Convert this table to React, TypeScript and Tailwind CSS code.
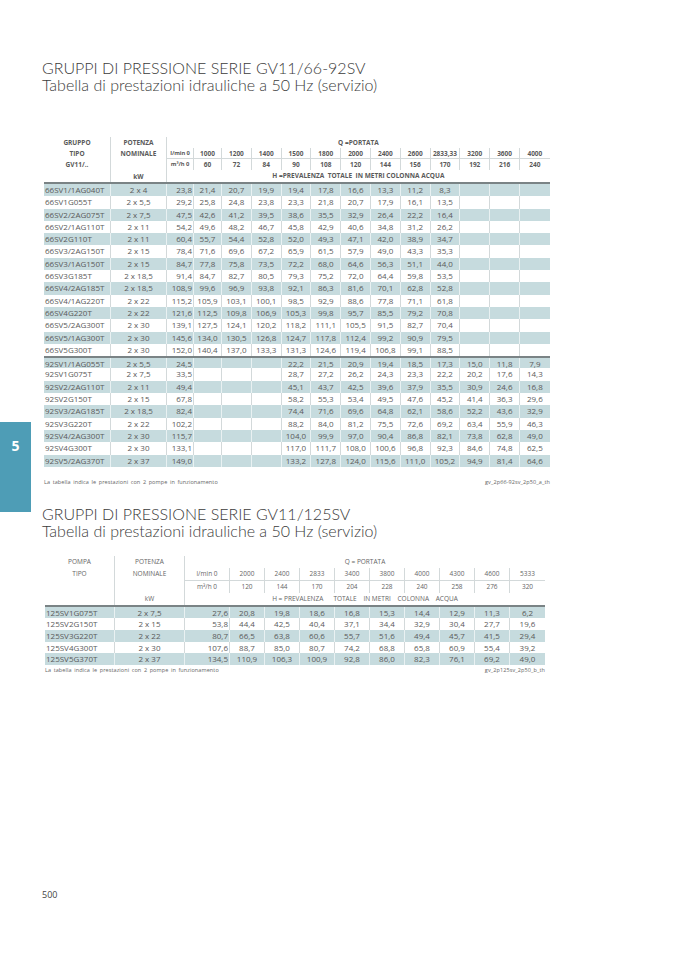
import React from 'react';

type Row = { name: string; kw: string; vals: string[] };

const E = '';

const t1Rows: Row[] = [
    { name: '66SV1/1AG040T', kw: '2 x 4', vals: ['23,8', '21,4', '20,7', '19,9', '19,4', '17,8', '16,6', '13,3', '11,2', '8,3', E, E, E] },
    { name: '66SV1G055T', kw: '2 x 5,5', vals: ['29,2', '25,8', '24,8', '23,8', '23,3', '21,8', '20,7', '17,9', '16,1', '13,5', E, E, E] },
    { name: '66SV2/2AG075T', kw: '2 x 7,5', vals: ['47,5', '42,6', '41,2', '39,5', '38,6', '35,5', '32,9', '26,4', '22,2', '16,4', E, E, E] },
    { name: '66SV2/1AG110T', kw: '2 x 11', vals: ['54,2', '49,6', '48,2', '46,7', '45,8', '42,9', '40,6', '34,8', '31,2', '26,2', E, E, E] },
    { name: '66SV2G110T', kw: '2 x 11', vals: ['60,4', '55,7', '54,4', '52,8', '52,0', '49,3', '47,1', '42,0', '38,9', '34,7', E, E, E] },
    { name: '66SV3/2AG150T', kw: '2 x 15', vals: ['78,4', '71,6', '69,6', '67,2', '65,9', '61,5', '57,9', '49,0', '43,3', '35,3', E, E, E] },
    { name: '66SV3/1AG150T', kw: '2 x 15', vals: ['84,7', '77,8', '75,8', '73,5', '72,2', '68,0', '64,6', '56,3', '51,1', '44,0', E, E, E] },
    { name: '66SV3G185T', kw: '2 x 18,5', vals: ['91,4', '84,7', '82,7', '80,5', '79,3', '75,2', '72,0', '64,4', '59,8', '53,5', E, E, E] },
    { name: '66SV4/2AG185T', kw: '2 x 18,5', vals: ['108,9', '99,6', '96,9', '93,8', '92,1', '86,3', '81,6', '70,1', '62,8', '52,8', E, E, E] },
    { name: '66SV4/1AG220T', kw: '2 x 22', vals: ['115,2', '105,9', '103,1', '100,1', '98,5', '92,9', '88,6', '77,8', '71,1', '61,8', E, E, E] },
    { name: '66SV4G220T', kw: '2 x 22', vals: ['121,6', '112,5', '109,8', '106,9', '105,3', '99,8', '95,7', '85,5', '79,2', '70,8', E, E, E] },
    { name: '66SV5/2AG300T', kw: '2 x 30', vals: ['139,1', '127,5', '124,1', '120,2', '118,2', '111,1', '105,5', '91,5', '82,7', '70,4', E, E, E] },
    { name: '66SV5/1AG300T', kw: '2 x 30', vals: ['145,6', '134,0', '130,5', '126,8', '124,7', '117,8', '112,4', '99,2', '90,9', '79,5', E, E, E] },
    { name: '66SV5G300T', kw: '2 x 30', vals: ['152,0', '140,4', '137,0', '133,3', '131,3', '124,6', '119,4', '106,8', '99,1', '88,5', E, E, E] },
    { name: '92SV1/1AG055T', kw: '2 x 5,5', vals: ['24,5', E, E, E, '22,2', '21,5', '20,9', '19,4', '18,5', '17,3', '15,0', '11,8', '7,9'] },
    { name: '92SV1G075T', kw: '2 x 7,5', vals: ['33,5', E, E, E, '28,7', '27,2', '26,2', '24,3', '23,3', '22,2', '20,2', '17,6', '14,3'] },
    { name: '92SV2/2AG110T', kw: '2 x 11', vals: ['49,4', E, E, E, '45,1', '43,7', '42,5', '39,6', '37,9', '35,5', '30,9', '24,6', '16,8'] },
    { name: '92SV2G150T', kw: '2 x 15', vals: ['67,8', E, E, E, '58,2', '55,3', '53,4', '49,5', '47,6', '45,2', '41,4', '36,3', '29,6'] },
    { name: '92SV3/2AG185T', kw: '2 x 18,5', vals: ['82,4', E, E, E, '74,4', '71,6', '69,6', '64,8', '62,1', '58,6', '52,2', '43,6', '32,9'] },
    { name: '92SV3G220T', kw: '2 x 22', vals: ['102,2', E, E, E, '88,2', '84,0', '81,2', '75,5', '72,6', '69,2', '63,4', '55,9', '46,3'] },
    { name: '92SV4/2AG300T', kw: '2 x 30', vals: ['115,7', E, E, E, '104,0', '99,9', '97,0', '90,4', '86,8', '82,1', '73,8', '62,8', '49,0'] },
    { name: '92SV4G300T', kw: '2 x 30', vals: ['133,1', E, E, E, '117,0', '111,7', '108,0', '100,6', '96,8', '92,3', '84,6', '74,8', '62,5'] },
    { name: '92SV5/2AG370T', kw: '2 x 37', vals: ['149,0', E, E, E, '133,2', '127,8', '124,0', '115,6', '111,0', '105,2', '94,9', '81,4', '64,6'] },
];

const t2Rows: Row[] = [
    { name: '125SV1G075T', kw: '2 x 7,5', vals: ['27,6', '20,8', '19,8', '18,6', '16,8', '15,3', '14,4', '12,9', '11,3', '6,2'] },
    { name: '125SV2G150T', kw: '2 x 15', vals: ['53,8', '44,4', '42,5', '40,4', '37,1', '34,4', '32,9', '30,4', '27,7', '19,6'] },
    { name: '125SV3G220T', kw: '2 x 22', vals: ['80,7', '66,5', '63,8', '60,6', '55,7', '51,6', '49,4', '45,7', '41,5', '29,4'] },
    { name: '125SV4G300T', kw: '2 x 30', vals: ['107,6', '88,7', '85,0', '80,7', '74,2', '68,8', '65,8', '60,9', '55,4', '39,2'] },
    { name: '125SV5G370T', kw: '2 x 37', vals: ['134,5', '110,9', '106,3', '100,9', '92,8', '86,0', '82,3', '76,1', '69,2', '49,0'] },
];

const t1Lmin = ['1000', '1200', '1400', '1500', '1800', '2000', '2400', '2600', '2833,33', '3200', '3600', '4000'];
const t1M3h = ['60', '72', '84', '90', '108', '120', '144', '156', '170', '192', '216', '240'];
const t2Lmin = ['2000', '2400', '2833', '3400', '3800', '4000', '4300', '4600', '5333'];
const t2M3h = ['120', '144', '170', '204', '228', '240', '258', '276', '320'];

const G1 = 'grid grid-cols-[67px_56px_27px_28px_repeat(11,29.8px)]';
const G2 = 'grid grid-cols-[70px_70px_45px_repeat(9,35px)]';
const LINE = 'border-[#d3d9da]';

function DataRow({ row, grid, h, shaded, sep }: { row: Row; grid: string; h: string; shaded: boolean; sep?: boolean }) {
    const cells = [row.name, row.kw, ...row.vals];
    const last = cells.length - 1;
    const line = shaded ? 'border-[#e9f1f2]' : LINE;
    return (
        <div className={`${grid} ${h} ${shaded ? 'bg-[#c6dbde]' : 'bg-white'} ${sep ? 'border-t-2 border-[#7a8385]' : ''}`}>
            {cells.map((c, i) => (
                <div
                    key={i}
                    className={`whitespace-nowrap ${i < last ? 'border-r ' + line : ''} ${i === 0 ? 'text-left pl-[1px]' : i === 2 ? 'text-right pr-[1px]' : 'text-center'}`}
                >
                    {c}
                </div>
            ))}
        </div>
    );
}

function Titles({ serie }: { serie: string }) {
    return (
        <div className="font-['Lato',sans-serif] font-light text-[16px] leading-[17px] text-[#3b3b3b]">
            <div>GRUPPI DI PRESSIONE SERIE {serie}</div>
            <div>Tabella di prestazioni idrauliche a 50 Hz (servizio)</div>
        </div>
    );
}

function Footnote({ code, width }: { code: string; width: string }) {
    return (
        <div className={`flex justify-between ${width} text-[5.5px] leading-[8px] text-[#666] tracking-[0.1px] [word-spacing:1px]`}>
            <span>La tabella indica le prestazioni con 2 pompe in funzionamento</span>
            <span>{code}</span>
        </div>
    );
}

function Table1() {
    const hRow = 'h-[11px] leading-[11px]';
    return (
        <div className="w-[506px] text-[#5a5a5a]">
            <div className={`${G1} text-[6.5px] font-bold`}>
                <div className={`${hRow} text-center border-r ${LINE}`}>GRUPPO</div>
                <div className={`${hRow} text-center border-r ${LINE}`}>POTENZA</div>
                <div className={`${hRow} col-span-13 text-center`}>Q =PORTATA</div>

                <div className={`${hRow} text-center border-r ${LINE}`}>TIPO</div>
                <div className={`${hRow} text-center border-r ${LINE}`}>NOMINALE</div>
                <div className={`${hRow} text-center border-r border-b ${LINE} whitespace-nowrap text-[5.8px] tracking-[-0.1px]`}>l/min 0</div>
                {t1Lmin.map((v, i) => (
                    <div key={v} className={`${hRow} text-center border-b ${LINE} ${i < t1Lmin.length - 1 ? 'border-r' : ''} whitespace-nowrap`}>{v}</div>
                ))}

                <div className={`${hRow} text-center border-r ${LINE}`}>GV11/..</div>
                <div className={`${hRow} border-r ${LINE}`}></div>
                <div className={`${hRow} text-center border-r ${LINE} whitespace-nowrap text-[5.8px] tracking-[-0.1px]`}>m³/h 0</div>
                {t1M3h.map((v, i) => (
                    <div key={v} className={`${hRow} text-center ${LINE} ${i < t1M3h.length - 1 ? 'border-r' : ''}`}>{v}</div>
                ))}

                <div className={`h-[12px] leading-[14px] border-r ${LINE}`}></div>
                <div className={`h-[12px] leading-[14px] text-center border-r ${LINE}`}>kW</div>
                <div className="h-[12px] leading-[11px] col-span-13 text-center whitespace-pre">H =PREVALENZA  TOTALE  IN METRI COLONNA ACQUA</div>
            </div>
            <div className="h-[2px] bg-[#7a8385]"></div>
            <div className="text-[8px] leading-[12.3px]">
                {t1Rows.map((r, i) => (
                    <DataRow key={r.name} row={r} grid={G1} h="h-[12.3px]" shaded={i % 2 === 0} sep={i === 14} />
                ))}
            </div>
        </div>
    );
}

function Table2() {
    const hRow = 'h-[12.5px] leading-[12.5px]';
    return (
        <div className="w-[500px] text-[#5a5a5a]">
            <div className={`${G2} text-[6.5px] text-[#666]`}>
                <div className={`${hRow} text-center border-r ${LINE}`}>POMPA</div>
                <div className={`${hRow} text-center border-r ${LINE}`}>POTENZA</div>
                <div className={`${hRow} col-span-10 text-center`}>Q = PORTATA</div>

                <div className={`${hRow} text-center border-r ${LINE}`}>TIPO</div>
                <div className={`${hRow} text-center border-r ${LINE}`}>NOMINALE</div>
                <div className={`${hRow} text-center border-r border-b ${LINE} whitespace-nowrap`}>l/min 0</div>
                {t2Lmin.map((v, i) => (
                    <div key={v} className={`${hRow} text-center border-b ${LINE} ${i < t2Lmin.length - 1 ? 'border-r' : ''}`}>{v}</div>
                ))}

                <div className={`${hRow} border-r ${LINE}`}></div>
                <div className={`${hRow} border-r ${LINE}`}></div>
                <div className={`${hRow} text-center border-r ${LINE} whitespace-nowrap`}>m³/h 0</div>
                {t2M3h.map((v, i) => (
                    <div key={v} className={`${hRow} text-center ${LINE} ${i < t2M3h.length - 1 ? 'border-r' : ''}`}>{v}</div>
                ))}

                <div className={`h-[11.5px] leading-[11.5px] border-r ${LINE}`}></div>
                <div className={`h-[11.5px] leading-[11.5px] text-center border-r ${LINE}`}>kW</div>
                <div className="h-[11.5px] leading-[11.5px] col-span-10 text-center whitespace-pre">H = PREVALENZA      TOTALE    IN METRI    COLONNA    ACQUA</div>
            </div>
            <div className="h-[2px] bg-[#7a8385]"></div>
            <div className="text-[8px] leading-[11.6px]">
                {t2Rows.map((r, i) => (
                    <DataRow key={r.name} row={r} grid={G2} h="h-[11.6px]" shaded={i % 2 === 0} />
                ))}
            </div>
        </div>
    );
}

export default function App() {
    return (
        <div className="relative w-[677px] h-[958px] bg-white font-['Open_Sans',sans-serif] overflow-hidden">
            <div className="absolute left-0 top-[422px] w-[31px] h-[90px] bg-[#4e9db6] flex justify-center pt-[17px]">
                <span className="text-white font-bold text-[14px] leading-[14px]">5</span>
            </div>
            <div className="pt-[59px] pl-[42px]">
                <Titles serie="GV11/66-92SV" />
                <div className="mt-[44px] ml-[2px]">
                    <Table1 />
                    <div className="mt-[11px]">
                        <Footnote code="gv_2p66-92sv_2p50_a_th" width="w-[506px]" />
                    </div>
                </div>
                <div className="mt-[19px]">
                    <Titles serie="GV11/125SV" />
                </div>
                <div className="mt-[17px] ml-[3px]">
                    <Table2 />
                    <div className="mt-[1px]">
                        <Footnote code="gv_2p125sv_2p50_b_th" width="w-[500px]" />
                    </div>
                </div>
                <div className="mt-[216px] text-[9px] leading-[10px] text-[#444]">500</div>
            </div>
        </div>
    );
}
